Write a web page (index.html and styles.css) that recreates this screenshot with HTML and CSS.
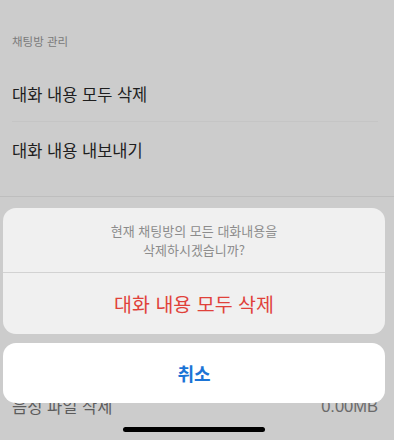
FILE: index.html
```html
<!DOCTYPE html>
<html lang="ko">
<head>
<meta charset="utf-8">
<title>채팅방 관리</title>
<link rel="stylesheet" href="styles.css">
</head>
<body>
<div class="screen">
  <section class="section first">
    <div class="section-header">채팅방 관리</div>
    <div class="row">대화 내용 모두 삭제</div>
    <div class="row">대화 내용 내보내기</div>
  </section>
  <section class="section second">
    <div class="section-spacer"></div>
    <div class="row muted">음성 파일 삭제<span class="value">0.00MB</span></div>
  </section>

  <div class="sheet">
    <div class="alert">
      <div class="message">현재 채팅방의 모든 대화내용을<br>삭제하시겠습니까?</div>
      <div class="action destructive">대화 내용 모두 삭제</div>
    </div>
    <div class="cancel">취소</div>
  </div>
  <div class="home-indicator"></div>
</div>
</body>
</html>
```
FILE: styles.css
```css
* { box-sizing: border-box; }
html, body {
  margin: 0;
  padding: 0;
}
body {
  background: #cccccc;
  font-family: "Noto Sans CJK KR", "Noto Sans", sans-serif;
  width: 394px;
  height: 440px;
  overflow: hidden;
}
.screen {
  position: relative;
  width: 394px;
  height: 440px;
  overflow: hidden;
}
.section-header {
  padding: 33px 12px 17px;
  font-size: 11.5px;
  line-height: 16px;
  color: #7a7a7a;
}
.section-spacer {
  height: 181px;
}
.row {
  display: flex;
  align-items: center;
  justify-content: space-between;
  height: 56px;
  margin: 0 16px 0 12px;
  font-size: 16.5px;
  color: #1e1e1e;
  border-bottom: 1px solid #c5c5c5;
}
.row:last-child { border-bottom: none; }
.section.first {
  height: 197px;
  border-bottom: 1px solid #bebebe;
}
.row.muted { color: #5c5c5c; }
.value {
  color: #6a6a6a;
  font-family: "Liberation Sans", "Noto Sans CJK KR", sans-serif;
  font-size: 16.5px;
}
.sheet {
  position: absolute;
  left: 3px;
  top: 208px;
  width: 382px;
  display: flex;
  flex-direction: column;
  gap: 9px;
}
.alert {
  background: #f0f0f0;
  border-radius: 13px;
  overflow: hidden;
}
.message {
  height: 65px;
  display: flex;
  align-items: center;
  justify-content: center;
  text-align: center;
  font-size: 13px;
  line-height: 19px;
  color: #8c8c8c;
  border-bottom: 1px solid #d2d2d2;
}
.action {
  height: 61px;
  display: flex;
  align-items: center;
  justify-content: center;
  font-size: 19.5px;
}
.destructive { color: #e0413a; }
.cancel {
  height: 60px;
  background: #ffffff;
  border-radius: 13px;
  display: flex;
  align-items: center;
  justify-content: center;
  font-size: 18px;
  font-weight: 600;
  color: #1b74d6;
}
.home-indicator {
  position: absolute;
  left: 123px;
  top: 427px;
  width: 142px;
  height: 5px;
  border-radius: 3px;
  background: #000;
}
```
